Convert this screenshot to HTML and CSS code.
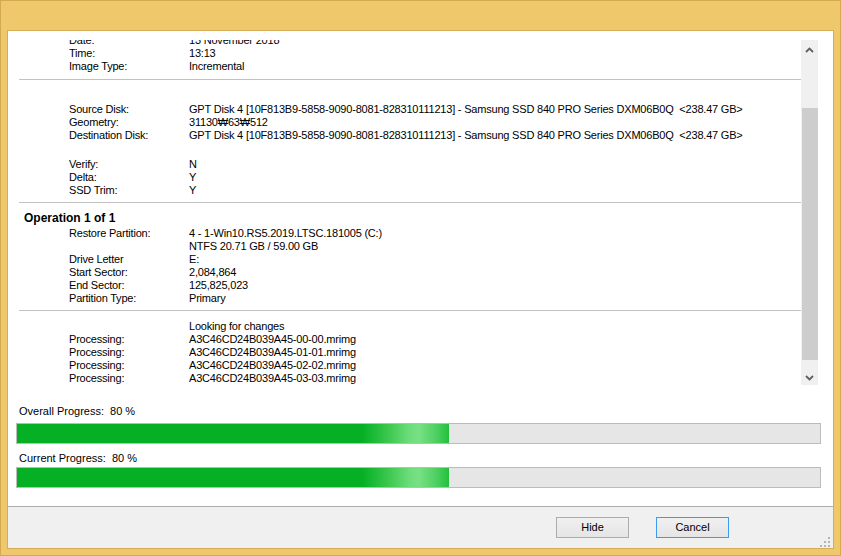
FILE: index.html
```html
<!DOCTYPE html>
<html>
<head>
<meta charset="utf-8">
<link rel="stylesheet" href="styles.css">
</head>
<body>
<div class="window">
  <div class="client">
    <div class="main">
      <div class="log">
        <div class="viewport">
          <div class="content">
            <div class="group g1">
              <div class="row"><span class="lbl">Date:</span><span class="val">13 November 2018</span></div>
              <div class="row"><span class="lbl">Time:</span><span class="val">13:13</span></div>
              <div class="row"><span class="lbl">Image Type:</span><span class="val">Incremental</span></div>
            </div>
            <div class="sep"></div>
            <div class="group g2">
              <div class="row"><span class="lbl">Source Disk:</span><span class="val">GPT Disk 4 [10F813B9-5858-9090-8081-828310111213] - Samsung SSD 840 PRO Series DXM06B0Q  &lt;238.47 GB&gt;</span></div>
              <div class="row"><span class="lbl">Geometry:</span><span class="val">31130₩63₩512</span></div>
              <div class="row"><span class="lbl">Destination Disk:</span><span class="val">GPT Disk 4 [10F813B9-5858-9090-8081-828310111213] - Samsung SSD 840 PRO Series DXM06B0Q  &lt;238.47 GB&gt;</span></div>
            </div>
            <div class="group g3">
              <div class="row"><span class="lbl">Verify:</span><span class="val">N</span></div>
              <div class="row"><span class="lbl">Delta:</span><span class="val">Y</span></div>
              <div class="row"><span class="lbl">SSD Trim:</span><span class="val">Y</span></div>
            </div>
            <div class="sep"></div>
            <div class="op-title">Operation 1 of 1</div>
            <div class="group g4">
              <div class="row"><span class="lbl">Restore Partition:</span><span class="val">4 - 1-Win10.RS5.2019.LTSC.181005 (C:)</span></div>
              <div class="row"><span class="lbl"></span><span class="val">NTFS 20.71 GB / 59.00 GB</span></div>
              <div class="row"><span class="lbl">Drive Letter</span><span class="val">E:</span></div>
              <div class="row"><span class="lbl">Start Sector:</span><span class="val">2,084,864</span></div>
              <div class="row"><span class="lbl">End Sector:</span><span class="val">125,825,023</span></div>
              <div class="row"><span class="lbl">Partition Type:</span><span class="val">Primary</span></div>
            </div>
            <div class="sep"></div>
            <div class="group g5">
              <div class="row"><span class="lbl"></span><span class="val">Looking for changes</span></div>
              <div class="row"><span class="lbl">Processing:</span><span class="val">A3C46CD24B039A45-00-00.mrimg</span></div>
              <div class="row"><span class="lbl">Processing:</span><span class="val">A3C46CD24B039A45-01-01.mrimg</span></div>
              <div class="row"><span class="lbl">Processing:</span><span class="val">A3C46CD24B039A45-02-02.mrimg</span></div>
              <div class="row"><span class="lbl">Processing:</span><span class="val">A3C46CD24B039A45-03-03.mrimg</span></div>
            </div>
          </div>
        </div>
        <div class="scrollbar">
          <div class="sb-btn">
            <svg width="17" height="17" viewBox="0 0 17 17"><polyline points="5,12 8.5,8.5 12,12" fill="none" stroke="#606060" stroke-width="1.8"/></svg>
          </div>
          <div class="sb-track"><div class="sb-thumb"></div></div>
          <div class="sb-btn">
            <svg width="17" height="17" viewBox="0 0 17 17"><polyline points="5,8 8.5,11.5 12,8" fill="none" stroke="#606060" stroke-width="1.8"/></svg>
          </div>
        </div>
      </div>
      <div class="progress">
        <div class="plabel first">Overall Progress:  80 %</div>
        <div class="bar"><div class="fill"></div></div>
        <div class="plabel second">Current Progress:  80 %</div>
        <div class="bar"><div class="fill"></div></div>
      </div>
    </div>
    <div class="footer">
      <button class="btn">Hide</button>
      <button class="btn default">Cancel</button>
      <svg class="grip" width="10" height="10" viewBox="0 0 10 10">
        <rect x="8" y="0" width="2" height="2" fill="#b4b4b4"/>
        <rect x="4" y="4" width="2" height="2" fill="#b4b4b4"/>
        <rect x="8" y="4" width="2" height="2" fill="#b4b4b4"/>
        <rect x="0" y="8" width="2" height="2" fill="#b4b4b4"/>
        <rect x="4" y="8" width="2" height="2" fill="#b4b4b4"/>
        <rect x="8" y="8" width="2" height="2" fill="#b4b4b4"/>
      </svg>
    </div>
  </div>
</div>
</body>
</html>
```

FILE: styles.css
```css
html, body {
  margin: 0;
  padding: 0;
}
body {
  width: 841px;
  height: 556px;
  overflow: hidden;
  font-family: "Liberation Sans", Arial, sans-serif;
  font-size: 11px;
  color: #000;
}
.window {
  box-sizing: border-box;
  width: 841px;
  height: 556px;
  border: 1px solid #d4a94f;
  background: #f0c86c;
  padding: 29px 6px 6px 6px;
}
.client {
  box-sizing: border-box;
  height: 100%;
  border: 1px solid #d6ad58;
  background: #fff;
  display: flex;
  flex-direction: column;
}
.main {
  flex: 1;
  display: flex;
  flex-direction: column;
}
.log {
  display: flex;
  height: 345px;
  margin: 9px 15px 0 11px;
}
.viewport {
  flex: 1;
  overflow: hidden;
}
.content {
  margin-top: -6px;
}
.row {
  display: grid;
  grid-template-columns: 120px 1fr;
  padding-left: 50px;
  line-height: 13px;
  height: 13px;
  white-space: pre;
  letter-spacing: -0.2px;
}
.sep {
  height: 1px;
  background: #c3c3c3;
}
.g1 + .sep { margin-top: 6px; }
.g2 { margin-top: 23px; }
.g3 { margin-top: 16px; }
.g3 + .sep { margin-top: 5px; }
.op-title {
  margin-top: 9px;
  padding-left: 5px;
  font-weight: bold;
  font-size: 12px;
  line-height: 13px;
  height: 13px;
}
.g4 { margin-top: 2px; }
.g4 + .sep { margin-top: 5px; }
.g5 { margin-top: 9px; }

.scrollbar {
  width: 17px;
  background: #f0f0f0;
  display: flex;
  flex-direction: column;
}
.sb-btn {
  height: 17px;
}
.sb-btn svg { display: block; }
.sb-track {
  flex: 1;
}
.sb-thumb {
  margin: 51px 0 0 1px;
  height: 252px;
  background: #cdcdcd;
}

.progress {
  display: flex;
  flex-direction: column;
  padding: 0 12px 0 8px;
}
.plabel {
  line-height: 13px;
  height: 13px;
  padding-left: 3px;
  white-space: pre;
}
.plabel.first { margin-top: 20px; }
.plabel.second { margin-top: 8px; }
.bar {
  box-sizing: border-box;
  height: 21px;
  border: 1px solid #bcbcbc;
  background: #e6e6e6;
  margin-top: 5px;
}
.plabel.second + .bar { margin-top: 2px; }
.fill {
  width: 432px;
  height: 100%;
  background: linear-gradient(to right, #06b025 0, #06b025 80%, #3cc84f 86%, #6edd7c 91%, #78e084 93%, #4fd062 97%, #22c03c 100%);
}

.footer {
  position: relative;
  box-sizing: border-box;
  height: 42px;
  border-top: 1px solid #adadad;
  background: #f0f0f0;
  display: flex;
  justify-content: flex-end;
  align-items: flex-start;
  gap: 27px;
  padding: 10px 104px 0 0;
}
.btn {
  box-sizing: border-box;
  width: 73px;
  height: 21px;
  margin: 0;
  padding: 0;
  border: 1px solid #acacac;
  background: linear-gradient(#f0f0f0, #e5e5e5);
  font-family: "Liberation Sans", Arial, sans-serif;
  font-size: 11px;
  color: #000;
  line-height: 19px;
  text-align: center;
}
.btn.default {
  border-color: #3d9af0;
}
.grip {
  position: absolute;
  right: 3px;
  bottom: 1px;
}
```
